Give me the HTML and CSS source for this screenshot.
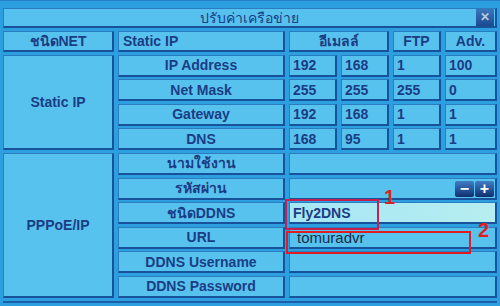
FILE: index.html
```html
<!DOCTYPE html>
<html lang="th">
<head>
  <meta charset="UTF-8" />
  <title>ปรับค่าเครือข่าย</title>
  <link rel="stylesheet" href="styles.css">
</head>
<body>
  <div class="screen">
    <div class="title">
      <span class="title-text">ปรับค่าเครือข่าย</span>
      <span class="close">✕</span>
    </div>

    <div class="grid">
      <!-- header -->
      <div class="cell c1 center">ชนิดNET</div>
      <div class="cell c2">Static IP</div>
      <div class="cell c34 center">อีเมลล์</div>
      <div class="cell c5 center">FTP</div>
      <div class="cell c6 center">Adv.</div>

      <!-- static ip -->
      <div class="cell group g-static">Static IP</div>
      <div class="cell c2 center">IP Address</div>
      <div class="cell c3 val">192</div>
      <div class="cell c4 val">168</div>
      <div class="cell c5 val">1</div>
      <div class="cell c6 val">100</div>

      <div class="cell c2 center">Net Mask</div>
      <div class="cell c3 val">255</div>
      <div class="cell c4 val">255</div>
      <div class="cell c5 val">255</div>
      <div class="cell c6 val">0</div>

      <div class="cell c2 center">Gateway</div>
      <div class="cell c3 val">192</div>
      <div class="cell c4 val">168</div>
      <div class="cell c5 val">1</div>
      <div class="cell c6 val">1</div>

      <div class="cell c2 center">DNS</div>
      <div class="cell c3 val">168</div>
      <div class="cell c4 val">95</div>
      <div class="cell c5 val">1</div>
      <div class="cell c6 val">1</div>

      <!-- pppoe -->
      <div class="cell group g-pppoe">PPPoE/IP</div>
      <div class="cell c2 center">นามใช้งาน</div>
      <div class="cell cwide"></div>

      <div class="cell c2 center">รหัสผ่าน</div>
      <div class="cell cwide spin">
        <span class="btn">−</span><span class="btn">+</span>
      </div>

      <div class="cell c2 center">ชนิดDDNS</div>
      <div class="cell cwide val select">Fly2DNS</div>

      <div class="cell c2 center">URL</div>
      <div class="cell cwide val url">tomuradvr</div>

      <div class="cell c2 center">DDNS Username</div>
      <div class="cell cwide"></div>

      <div class="cell c2 center">DDNS Password</div>
      <div class="cell cwide"></div>
    </div>

    <div class="mark mark-1"></div>
    <span class="num num-1">1</span>
    <div class="mark mark-2"></div>
    <span class="num num-2">2</span>
  </div>
</body>
</html>
```

FILE: styles.css
```css
* {
  box-sizing: border-box;
}
body {
  margin: 0;
  background: #2b9fe0;
  font-family: 'Liberation Sans', Arial, 'Noto Sans', sans-serif;
}
.screen {
  position: relative;
  width: 500px;
  height: 306px;
  padding: 7px 3px 0 3px;
  background: #2b9fe0;
  border-top: 1px solid #2582c8;
}
.title {
  display: flex;
  align-items: center;
  height: 20px;
  background: #56c0ee;
  border-top: 1px solid #2c7cc0;
  border-left: 1px solid #2c7cc0;
  border-bottom: 2px solid #17529a;
  border-right: 2px solid #17529a;
}
.title-text {
  flex: 1;
  text-align: center;
  padding-left: 18px;
  font-size: 14px;
  color: #1b3d84;
}
.close {
  width: 18px;
  height: 17px;
  margin-right: 1px;
  background: linear-gradient(#3a78bc, #1a4a90);
  color: #b8c8dc;
  font-size: 12px;
  font-weight: bold;
  line-height: 17px;
  text-align: center;
}
.grid {
  display: grid;
  grid-template-columns: 111px 167px 48px 48px 48px 52px;
  grid-template-rows: 21px repeat(10, 22px);
  column-gap: 4px;
  row-gap: 2.6px;
  margin-top: 3px;
  padding-bottom: 3px;
  border-bottom: 2px solid #1d5ea6;
}
.cell {
  display: flex;
  align-items: center;
  padding: 0 4px;
  background: #58c2ef;
  border-top: 1px solid #2c7cc0;
  border-left: 1px solid #2c7cc0;
  border-bottom: 2px solid #17529a;
  border-right: 2px solid #17529a;
  color: #1b3d84;
  font-size: 14px;
  font-weight: bold;
  white-space: nowrap;
  overflow: hidden;
}
.center {
  justify-content: center;
}
.val {
  padding-left: 3px;
}
.c1 { grid-column: 1; }
.c2 { grid-column: 2; }
.c3 { grid-column: 3; }
.c4 { grid-column: 4; }
.c5 { grid-column: 5; }
.c6 { grid-column: 6; }
.c34 { grid-column: 3 / 5; }
.cwide { grid-column: 3 / 7; }
.group {
  grid-column: 1;
  justify-content: center;
}
.g-static { grid-row: 2 / 6; }
.g-pppoe { grid-row: 6 / 12; }
.spin {
  justify-content: flex-end;
  align-items: flex-end;
  padding: 0 1px 1px 0;
  gap: 1px;
}
.btn {
  width: 19px;
  height: 16px;
  background: linear-gradient(#3f7dc6, #0f2f70);
  border-radius: 2px;
  color: #fff;
  font-size: 16px;
  font-weight: bold;
  line-height: 15px;
  text-align: center;
}
.select {
  background: linear-gradient(90deg, #a6e6f5, #b6eef0);
}
.url {
  padding-left: 7px;
  font-weight: normal;
  font-size: 15px;
  color: #1c2c44;
}
.mark {
  position: absolute;
  border: 2px solid #d0203a;
}
.mark-1 {
  left: 285px;
  top: 198px;
  width: 94px;
  height: 31px;
  border-color: #c62050;
}
.mark-2 {
  left: 286px;
  top: 230px;
  width: 185px;
  height: 23px;
  border-color: #e01c24;
}
.num {
  position: absolute;
  color: #e02020;
  font-size: 20px;
  font-weight: bold;
  font-family: 'Liberation Sans', Arial, sans-serif;
}
.num-1 {
  left: 384px;
  top: 185px;
}
.num-2 {
  left: 478px;
  top: 218px;
}
```
